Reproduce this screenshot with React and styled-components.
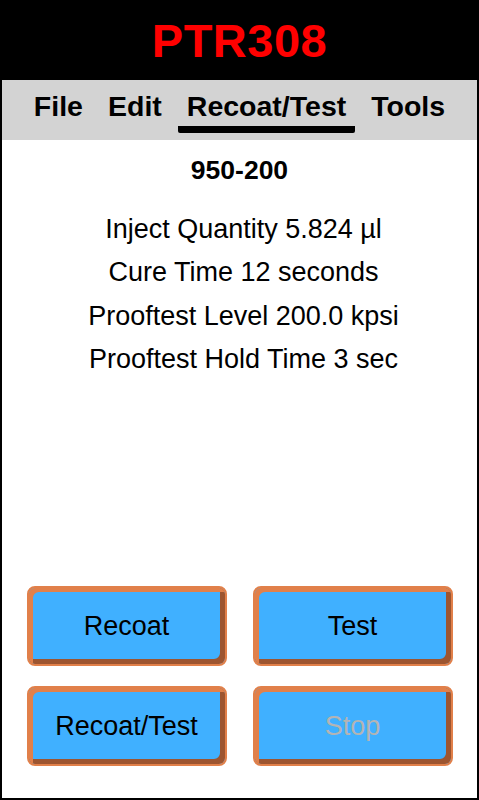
import React from "react";
import styled, { createGlobalStyle } from "styled-components";

const GlobalStyle = createGlobalStyle`
  html, body {
    margin: 0;
    padding: 0;
    background: #fff;
  }
  body {
    font-family: "Liberation Sans", Arial, sans-serif;
  }
`;

const Frame = styled.div`
  box-sizing: border-box;
  width: 479px;
  height: 800px;
  border: 2px solid #000;
  border-top: none;
  display: flex;
  flex-direction: column;
  background: #fff;
`;

const Header = styled.header`
  height: 80px;
  margin: 0 -2px;
  background: #000;
  display: flex;
  align-items: center;
  justify-content: center;
`;

const Title = styled.h1`
  margin: 0;
  color: #ff0000;
  font-size: 47px;
  font-weight: bold;
  letter-spacing: 0.5px;
  line-height: 1;
`;

const MenuBar = styled.nav`
  box-sizing: border-box;
  height: 60px;
  padding-top: 11px;
  background: #d3d3d3;
  display: flex;
  justify-content: center;
  align-items: flex-start;
  gap: 7px;
`;

const Tab = styled.div`
  padding: 0 9px 5px;
  font-size: 28.5px;
  font-weight: bold;
  line-height: 30px;
  color: #000;
  border-bottom: 7px solid ${(p) => (p.$active ? "#000" : "transparent")};
  border-radius: 0 0 2px 2px;
`;

const Content = styled.main`
  flex: 1;
  display: flex;
  flex-direction: column;
  align-items: center;
  padding-bottom: 32px;
`;

const PartNo = styled.div`
  margin-top: 16px;
  font-size: 26.5px;
  font-weight: bold;
  line-height: 28px;
`;

const Info = styled.div`
  margin: 24px 0 0 8px;
  text-align: center;
  font-size: 27px;
  line-height: 43.4px;
  color: #000;
`;

const ButtonGrid = styled.div`
  margin-top: auto;
  display: grid;
  grid-template-columns: 200px 200px;
  grid-auto-rows: 80px;
  column-gap: 26px;
  row-gap: 20px;
`;

const Button = styled.button`
  box-sizing: border-box;
  border: 2px solid #e1804a;
  border-radius: 8px;
  background: #40b0ff;
  box-shadow: inset 4px 4px 0 #e1804a, inset -5px -5px 0 #9d5530;
  font-family: "Liberation Sans", Arial, sans-serif;
  font-size: 27px;
  color: ${(p) => (p.disabled ? "#b4b4b4" : "#000")};
  padding: 0;
  cursor: pointer;
`;

const tabs = ["File", "Edit", "Recoat/Test", "Tools"];

const lines = [
  "Inject Quantity 5.824 µl",
  "Cure Time 12 seconds",
  "Prooftest Level 200.0 kpsi",
  "Prooftest Hold Time 3 sec",
];

export default function App() {
  return (
    <>
      <GlobalStyle />
      <Frame>
        <Header>
          <Title>PTR308</Title>
        </Header>
        <MenuBar>
          {tabs.map((t) => (
            <Tab key={t} $active={t === "Recoat/Test"}>
              {t}
            </Tab>
          ))}
        </MenuBar>
        <Content>
          <PartNo>950-200</PartNo>
          <Info>
            {lines.map((l) => (
              <div key={l}>{l}</div>
            ))}
          </Info>
          <ButtonGrid>
            <Button>Recoat</Button>
            <Button>Test</Button>
            <Button>Recoat/Test</Button>
            <Button disabled>Stop</Button>
          </ButtonGrid>
        </Content>
      </Frame>
    </>
  );
}
